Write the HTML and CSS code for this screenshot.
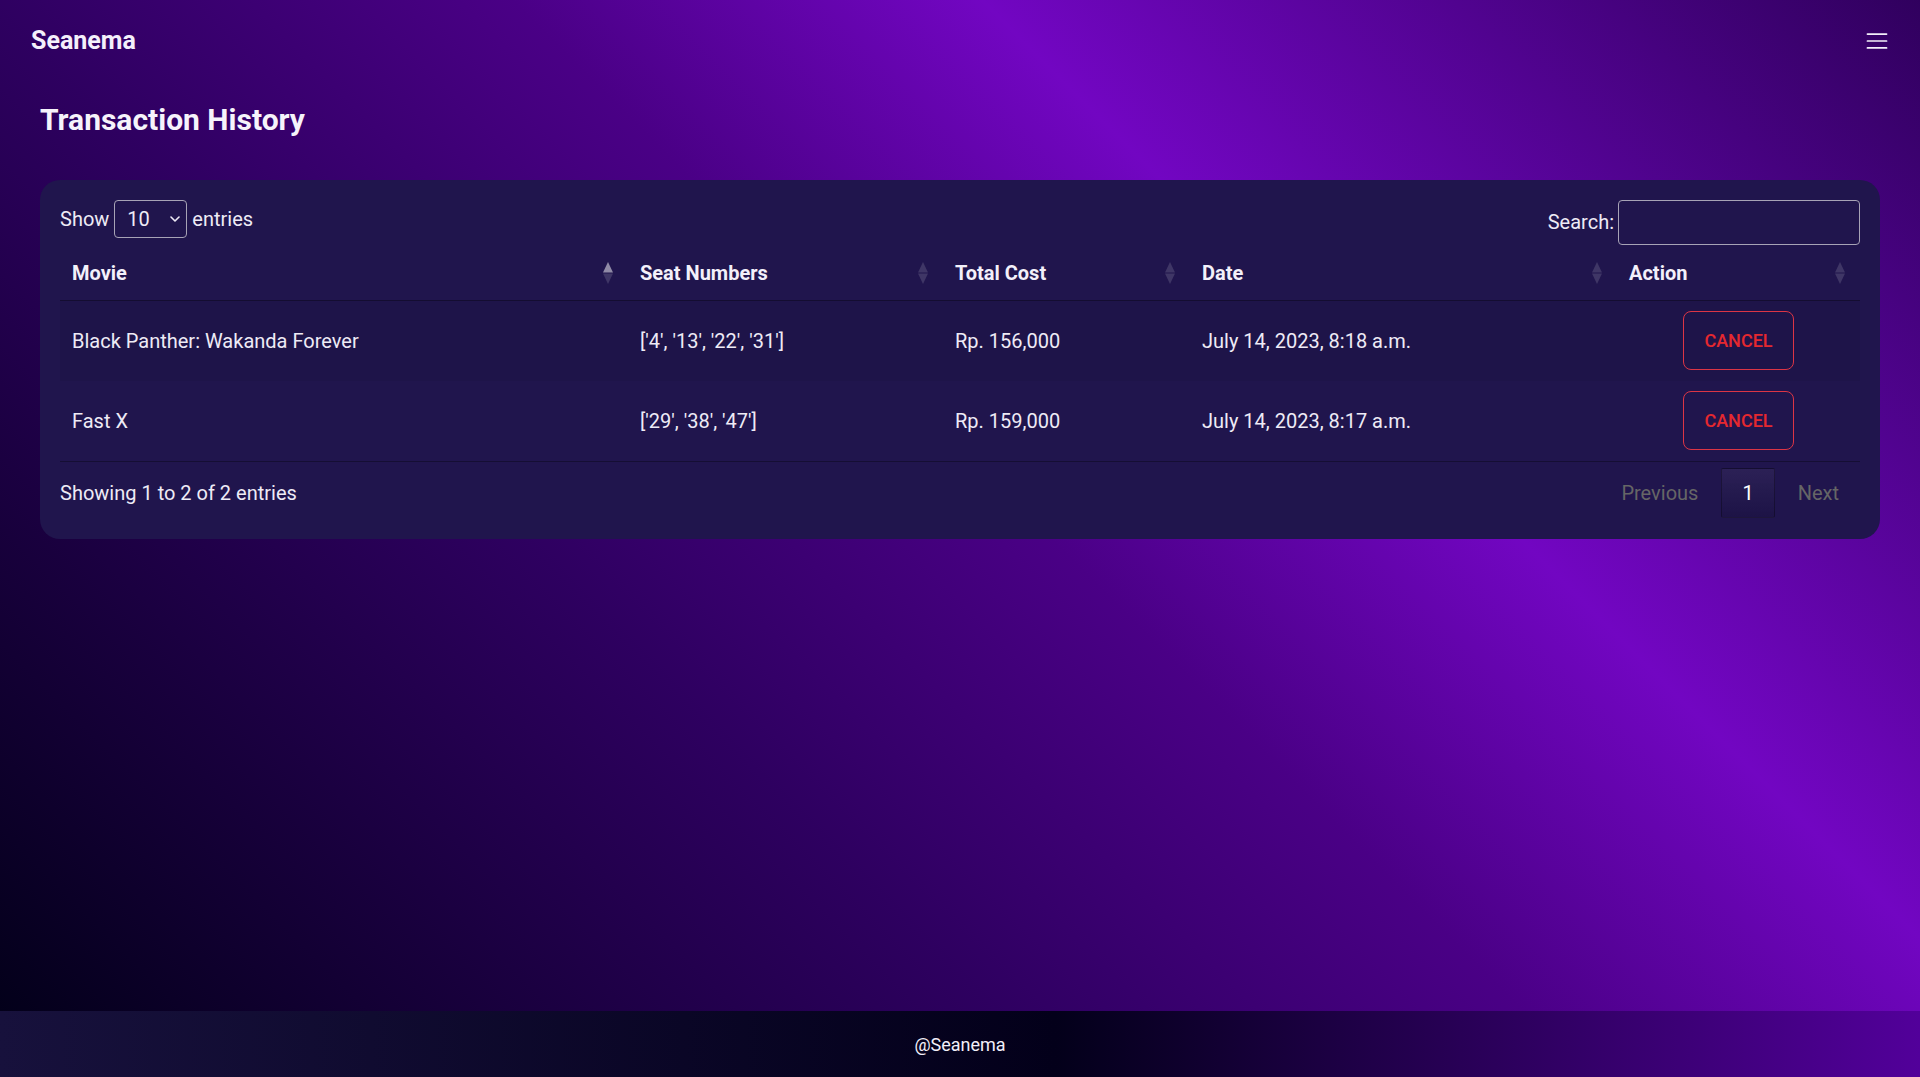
FILE: index.html
```html
<!DOCTYPE html>
<html lang="en">
<head>
<meta charset="utf-8">
<title>Seanema - Transaction History</title>
<link rel="stylesheet" href="styles.css">
</head>
<body>
<div class="page">
  <nav class="navbar">
    <span class="brand">Seanema</span>
    <svg class="toggler" viewBox="0 0 30 30" aria-label="Menu">
      <path d="M4 7h22M4 15h22M4 23h22" stroke="#f3effa" stroke-width="2" stroke-linecap="round" fill="none"/>
    </svg>
  </nav>
  <main class="content">
    <h1 class="title">Transaction History</h1>
    <section class="card">
      <div class="card-top">
        <div class="length">
          <span>Show</span>
          <div class="select">
            <span>10</span>
            <svg class="chev" viewBox="0 0 10 6"><path d="M1 1l4 4 4-4" stroke="#eeeaf6" stroke-width="1.6" fill="none" stroke-linecap="round" stroke-linejoin="round"/></svg>
          </div>
          <span>entries</span>
        </div>
        <div class="filter">
          <span>Search:</span>
          <input class="search" type="search" aria-label="Search">
        </div>
      </div>
      <table class="table">
        <colgroup>
          <col class="c-movie"><col class="c-seat"><col class="c-cost"><col class="c-date"><col class="c-action">
        </colgroup>
        <thead>
          <tr>
            <th><div class="th-inner"><span>Movie</span><svg class="sort" viewBox="0 0 10 22"><path class="up on" d="M5 0L10 10.5H0Z"/><path class="down" d="M0 11.5H10L5 22Z"/></svg></div></th>
            <th><div class="th-inner"><span>Seat Numbers</span><svg class="sort" viewBox="0 0 10 22"><path class="up" d="M5 0L10 10.5H0Z"/><path class="down" d="M0 11.5H10L5 22Z"/></svg></div></th>
            <th><div class="th-inner"><span>Total Cost</span><svg class="sort" viewBox="0 0 10 22"><path class="up" d="M5 0L10 10.5H0Z"/><path class="down" d="M0 11.5H10L5 22Z"/></svg></div></th>
            <th><div class="th-inner"><span>Date</span><svg class="sort" viewBox="0 0 10 22"><path class="up" d="M5 0L10 10.5H0Z"/><path class="down" d="M0 11.5H10L5 22Z"/></svg></div></th>
            <th><div class="th-inner"><span>Action</span><svg class="sort" viewBox="0 0 10 22"><path class="up" d="M5 0L10 10.5H0Z"/><path class="down" d="M0 11.5H10L5 22Z"/></svg></div></th>
          </tr>
        </thead>
        <tbody>
          <tr>
            <td>Black Panther: Wakanda Forever</td>
            <td>['4', '13', '22', '31']</td>
            <td>Rp. 156,000</td>
            <td>July 14, 2023, 8:18 a.m.</td>
            <td class="action"><button class="btn-cancel" type="button">Cancel</button></td>
          </tr>
          <tr>
            <td>Fast X</td>
            <td>['29', '38', '47']</td>
            <td>Rp. 159,000</td>
            <td>July 14, 2023, 8:17 a.m.</td>
            <td class="action"><button class="btn-cancel" type="button">Cancel</button></td>
          </tr>
        </tbody>
      </table>
      <div class="card-bottom">
        <div class="info">Showing 1 to 2 of 2 entries</div>
        <div class="pager">
          <span class="page-btn disabled">Previous</span>
          <span class="page-btn current">1</span>
          <span class="page-btn disabled">Next</span>
        </div>
      </div>
    </section>
  </main>
</div>
<footer class="footer">@Seanema</footer>
</body>
</html>
```

FILE: styles.css
```css
* { box-sizing: border-box; }

html, body { margin: 0; }

body {
  font-family: Roboto, "Liberation Sans", Arial, sans-serif;
  font-size: 20px;
  line-height: 1.5;
  color: #eeebf6;
  min-height: 100vh;
  display: flex;
  flex-direction: column;
}

.page {
  flex: 1;
  background: linear-gradient(45deg, #03001a 0%, #2e0060 34%, #4a0086 52%, #7206c2 68%, #30005e 100%);
}

.navbar {
  display: flex;
  justify-content: space-between;
  align-items: center;
  padding: 22px 30px 0 31px;
}

.brand {
  font-size: 25px;
  font-weight: 700;
  line-height: 37.5px;
  color: #f4f0fb;
}

.toggler {
  width: 26px;
  height: 26px;
  display: block;
}

.content {
  padding: 42px 40px 0;
}

.title {
  margin: 0 0 42px;
  font-size: 30px;
  font-weight: 700;
  line-height: 36px;
  color: #f6f3fb;
}

.card {
  background: #20154d;
  border-radius: 20px;
  padding: 20px 20px 21px;
}

.card-top {
  display: flex;
  justify-content: space-between;
  align-items: flex-start;
}

.length {
  display: flex;
  align-items: center;
  gap: 5px;
  height: 38px;
}

.select {
  width: 73px;
  height: 38px;
  border: 1px solid #a7a3b6;
  border-radius: 4px;
  display: flex;
  align-items: center;
  justify-content: space-between;
  padding: 0 6px 0 12px;
}

.chev {
  width: 10px;
  height: 6px;
  display: block;
}

.filter {
  display: flex;
  align-items: center;
  gap: 4px;
  height: 45px;
}

.search {
  width: 242px;
  height: 45px;
  border: 1px solid #a7a3b6;
  border-radius: 4px;
  background: transparent;
  color: #eeebf6;
  font: inherit;
  padding: 5px 8px;
  outline: none;
}

.table {
  width: 100%;
  margin-top: 1px;
  border-collapse: collapse;
  table-layout: fixed;
}

.c-movie { width: 568px; }
.c-seat { width: 315px; }
.c-cost { width: 247px; }
.c-date { width: 427px; }
.c-action { width: 243px; }

.table th {
  padding: 12px 15px 12px 12px;
  font-weight: 700;
  text-align: left;
  border-bottom: 1px solid rgba(0, 0, 0, 0.32);
  color: #f3f0fa;
}

.th-inner {
  display: flex;
  justify-content: space-between;
  align-items: center;
}

.sort {
  width: 10px;
  height: 22px;
  display: block;
  flex: none;
}

.sort path { fill: #ffffff; opacity: 0.14; }
.sort path.on { opacity: 0.5; }

.table td {
  padding: 10.5px 12px;
  vertical-align: middle;
}

.table tbody tr:nth-child(odd) td {
  background: rgba(0, 0, 0, 0.04);
}

.table tbody tr:last-child td {
  border-bottom: 1px solid rgba(0, 0, 0, 0.32);
}

.table td.action {
  text-align: center;
}

.btn-cancel {
  font-family: Roboto, "Liberation Sans", Arial, sans-serif;
  font-size: 18px;
  font-weight: 500;
  line-height: 27px;
  text-transform: uppercase;
  color: #e5282f;
  background: transparent;
  border: 1px solid #dc3545;
  border-radius: 8px;
  padding: 15px 20px;
}

.card-bottom {
  display: flex;
  justify-content: space-between;
  align-items: center;
  padding-top: 6px;
}

.pager {
  display: flex;
  align-items: center;
  gap: 2px;
}

.page-btn {
  padding: 10px 20px;
  line-height: 28px;
  border: 1px solid transparent;
  border-radius: 2px;
}

.page-btn.disabled {
  color: #666666;
}

.page-btn.current {
  color: #ffffff;
  border-color: rgba(0, 0, 0, 0.3);
  background: linear-gradient(to bottom, rgba(230, 230, 230, 0.06) 0%, rgba(0, 0, 0, 0.08) 100%);
}

.footer {
  height: 66px;
  display: flex;
  align-items: center;
  justify-content: center;
  font-size: 18px;
  color: #f2eff8;
  background: linear-gradient(to right, #17113c 0%, #03001a 55%, #52009a 100%);
}
```
